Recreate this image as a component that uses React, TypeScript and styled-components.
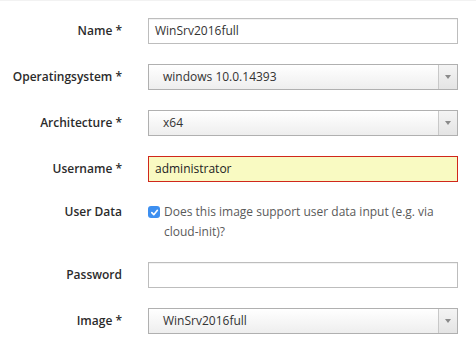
import React from "react";
import styled, { createGlobalStyle } from "styled-components";

const GlobalStyle = createGlobalStyle`
  html, body {
    margin: 0;
    padding: 0;
    background: #fff;
  }
  body {
    font-family: "Open Sans", "Liberation Sans", sans-serif;
    font-size: 12px;
    color: #333;
  }
`;

const Form = styled.form`
  border-top: 1px solid #f2f2f2;
  padding-top: 17px;
  display: grid;
  grid-template-columns: 122px 310px;
  column-gap: 26px;
  row-gap: 20px;
  width: 476px;
`;

const Label = styled.label<{ $top?: boolean }>`
  font-weight: 600;
  text-align: right;
  line-height: ${(p) => (p.$top ? "20px" : "26px")};
  color: #2b2b2b;
  white-space: nowrap;
`;

const TextInput = styled.div<{ $error?: boolean }>`
  box-sizing: border-box;
  height: 26px;
  border: 1px solid ${(p) => (p.$error ? "#d0271b" : "#bdbdbd")};
  background: ${(p) => (p.$error ? "#f9fac2" : "#fff")};
  padding: 0 6px;
  line-height: 24px;
  color: ${(p) => (p.$error ? "#222" : "#333")};
  box-shadow: ${(p) => (p.$error ? "none" : "inset 0 1px 0 #f2f2f2")};
`;

const Select = styled.div`
  box-sizing: border-box;
  height: 26px;
  border: 1px solid #b0b0b0;
  background: linear-gradient(#ffffff, #eeeeee);
  display: flex;
  align-items: stretch;
`;

const SelectValue = styled.span`
  flex: 1;
  padding-left: 14px;
  line-height: 24px;
  color: #333;
`;

const Arrow = styled.span`
  width: 18px;
  border-left: 1px solid #c8c8c8;
  background: linear-gradient(#f4f4f4, #e4e4e4);
  display: flex;
  align-items: center;
  justify-content: center;

  &::after {
    content: "";
    border-left: 3.5px solid transparent;
    border-right: 3.5px solid transparent;
    border-top: 4px solid #8a8a8a;
  }
`;

const CheckRow = styled.div`
  display: flex;
  align-items: flex-start;
  line-height: 20px;
  color: #5a5a5a;
`;

const Box = styled.span`
  flex: none;
  width: 12px;
  height: 12px;
  margin: 4px 4px 0 0;
  border-radius: 3px;
  background: #3d8ff0;
  display: flex;
  align-items: center;
  justify-content: center;
`;

const Check = () => (
  <Box>
    <svg width="9" height="9" viewBox="0 0 10 10">
      <path d="M2 5.2 L4.2 7.4 L8.2 2.6" fill="none" stroke="#fff" strokeWidth="1.8" strokeLinecap="round" strokeLinejoin="round" />
    </svg>
  </Box>
);

const DropDown = ({ value }: { value: string }) => (
  <Select>
    <SelectValue>{value}</SelectValue>
    <Arrow />
  </Select>
);

export default function App() {
  return (
    <>
      <GlobalStyle />
      <Form>
        <Label>Name *</Label>
        <TextInput>WinSrv2016full</TextInput>

        <Label>Operatingsystem *</Label>
        <DropDown value="windows 10.0.14393" />

        <Label>Architecture *</Label>
        <DropDown value="x64" />

        <Label>Username *</Label>
        <TextInput $error>administrator</TextInput>

        <Label $top>User Data</Label>
        <CheckRow>
          <Check />
          <span>Does this image support user data input (e.g. via cloud-init)?</span>
        </CheckRow>

        <Label>Password</Label>
        <TextInput />

        <Label>Image *</Label>
        <DropDown value="WinSrv2016full" />
      </Form>
    </>
  );
}
